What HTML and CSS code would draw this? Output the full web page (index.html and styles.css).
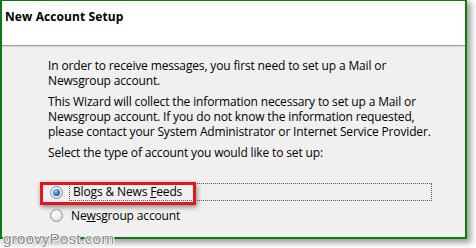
FILE: index.html
```html
<!DOCTYPE html>
<html>
<head>
<meta charset="utf-8">
<link rel="stylesheet" href="styles.css">
</head>
<body>
<div class="window">
  <div class="header"><h1 class="title">New Account Setup</h1></div>
  <div class="content">
    <p class="para">In order to receive messages, you first need to set up a Mail or<br>Newsgroup account.</p>
    <p class="para">This Wizard will collect the information necessary to set up a Mail or<br>Newsgroup account. If you do not know the information requested,<br>please contact your System Administrator or Internet Service Provider.</p>
    <p class="para">Select the type of account you would like to set up:</p>
    <div class="options">
      <div class="option">
        <span class="radio radio-on"></span>
        <span class="label focus">Blogs &amp; News <u>F</u>eeds</span>
        <span class="highlight"></span>
      </div>
      <div class="option">
        <span class="radio"></span>
        <span class="label">Ne<u>w</u>sgroup account</span>
      </div>
    </div>
  </div>
</div>
<div class="watermark">groovyPost.com</div>
</body>
</html>
```
FILE: styles.css
```css
html, body {
  margin: 0;
  padding: 0;
  background: #ffffff;
  width: 476px;
  height: 248px;
  overflow: hidden;
  position: relative;
}
.window {
  box-sizing: border-box;
  width: 467px;
  height: 239px;
  border: 2px solid #0d7a12;
  border-top-width: 1px;
  background: #f0f0f0;
  box-shadow: 3px 3px 6px 1px rgba(0,0,0,0.38);
  display: flex;
  flex-direction: column;
  font-family: "Open Sans", "Noto Sans", sans-serif;
  font-size: 12px;
  color: #000;
}
.header {
  height: 45px;
  background: #ffffff;
  border-bottom: 1px solid #a0a0a0;
  box-shadow: 0 1px 0 #d8d8d8;
  padding: 7px 0 0 3px;
  box-sizing: border-box;
}
.title {
  margin: 0;
  font-size: 12px;
  font-weight: bold;
  color: #000;
  letter-spacing: 0.1px;
}
.content {
  padding: 12px 0 0 46px;
}
.para {
  margin: 0 0 6px 0;
  line-height: 15px;
  letter-spacing: -0.15px;
}
.options {
  margin-top: 23px;
  display: flex;
  flex-direction: column;
  gap: 5px;
}
.option {
  position: relative;
  display: flex;
  align-items: center;
  height: 18px;
}
.radio {
  box-sizing: border-box;
  flex: none;
  width: 13px;
  height: 13px;
  margin-left: 2px;
  border-radius: 50%;
  border: 1px solid #8e8f8f;
  background: radial-gradient(circle at 40% 35%, #ffffff 0%, #f0f0f0 40%, #cfcfcf 100%);
  display: flex;
  align-items: center;
  justify-content: center;
}
.radio-on::after {
  content: "";
  width: 7px;
  height: 7px;
  border-radius: 50%;
  background: radial-gradient(circle at 40% 35%, #a9d4ff 0%, #3b7bd6 45%, #1a3f8f 100%);
}
.label {
  margin-left: 5px;
  padding: 0 3px;
  letter-spacing: -0.15px;
  white-space: pre;
}
.focus {
  box-sizing: border-box;
  display: block;
  width: 363px;
  height: 18px;
  line-height: 16px;
  border: 1px dotted #555;
  padding-left: 3px;
  margin-left: 6px;
}
.highlight {
  position: absolute;
  left: -8px;
  top: -1px;
  width: 156px;
  height: 23px;
  box-sizing: border-box;
  border: 3px solid #e8141b;
  box-shadow: 1px 2px 5px rgba(0,0,0,0.45);
  pointer-events: none;
}
.watermark {
  position: absolute;
  left: 3px;
  top: 230px;
  font-family: "Liberation Sans", Arial, sans-serif;
  font-size: 15.5px;
  color: #8a8a8a;
  text-shadow: 1px 0 0 #fff, -1px 0 0 #fff, 0 1px 0 #fff, 0 -1px 0 #fff;
}
```
